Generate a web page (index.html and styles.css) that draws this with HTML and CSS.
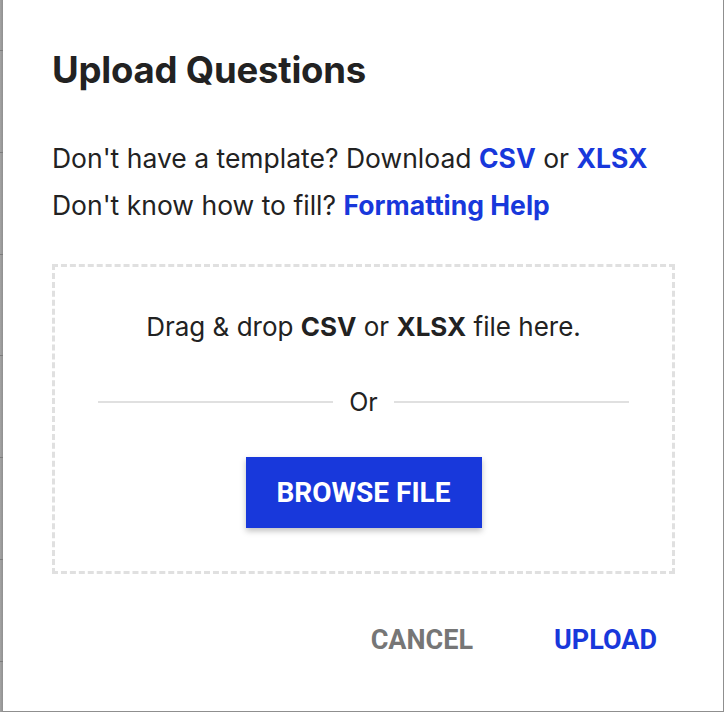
FILE: index.html
```html
<!DOCTYPE html>
<html lang="en">
<head>
    <meta charset="UTF-8">
    <meta name="viewport" content="width=device-width, initial-scale=1.0">
    <title>Upload Questions</title>
    <link rel="stylesheet" href="styles.css">
</head>
<body>
    <div class="backdrop">
        <span class="row-line"></span>
        <span class="row-line"></span>
        <span class="row-line"></span>
        <span class="row-line"></span>
        <span class="row-line"></span>
        <span class="row-line"></span>
        <span class="row-line"></span>
    </div>

    <div class="dialog">
        <h2 class="dialog-title">Upload Questions</h2>

        <p class="hint">Don't have a template? Download <a href="#">CSV</a> or <a href="#">XLSX</a></p>
        <p class="hint">Don't know how to fill? <a href="#">Formatting Help</a></p>

        <div class="dropzone">
            <p class="drop-text">Drag &amp; drop <strong>CSV</strong> or <strong>XLSX</strong> file here.</p>
            <div class="divider"><span>Or</span></div>
            <button class="browse-btn">Browse File</button>
        </div>

        <div class="actions">
            <button class="text-btn cancel">Cancel</button>
            <button class="text-btn upload">Upload</button>
        </div>
    </div>
</body>
</html>
```

FILE: styles.css
```css
html, body {
    margin: 0;
    height: 100%;
}
body {
    display: flex;
    align-items: flex-start;
    background-color: #8f8f8f;
    font-family: Inter, "Noto Sans", sans-serif;
    color: #222;
    overflow: hidden;
}
.backdrop {
    width: 3px;
    height: 712px;
    background: linear-gradient(to right, #a4a4a4, #909090);
    display: flex;
    flex-direction: column;
    justify-content: space-around;
}
.row-line {
    display: block;
    height: 1px;
    background: #7c7c7c;
}
.dialog {
    width: 720px;
    height: 711px;
    box-sizing: border-box;
    background: white;
    padding: 46px 48px 0 49px;
    display: flex;
    flex-direction: column;
}
.dialog-title {
    margin: 0 0 41px;
    font-size: 36.5px;
    line-height: 48px;
    font-weight: 700;
    letter-spacing: -0.2px;
}
.hint {
    margin: 0;
    font-size: 26.5px;
    line-height: 47px;
}
.hint a {
    color: #1838db;
    font-weight: 700;
    text-decoration: none;
}
.dropzone {
    margin: 35px 0 0;
    height: 310px;
    box-sizing: border-box;
    border: 3px dashed #e0e0e0;
    display: flex;
    flex-direction: column;
    align-items: center;
    padding: 0 43px;
}
.drop-text {
    margin: 42px 0 0;
    font-size: 26px;
    line-height: 36px;
}
.drop-text strong {
    font-weight: 700;
}
.divider {
    align-self: stretch;
    display: flex;
    align-items: center;
    gap: 16px;
    margin-top: 39px;
    font-size: 25px;
    line-height: 36px;
}
.divider::before,
.divider::after {
    content: "";
    flex: 1;
    height: 2px;
    background: #e0e0e0;
}
.browse-btn {
    margin-top: 37px;
    width: 236px;
    height: 71px;
    border: none;
    background-color: #1838db;
    color: white;
    font-family: Roboto, sans-serif;
    font-size: 28px;
    font-weight: 700;
    text-transform: uppercase;
    box-shadow: 0 3px 6px rgba(0,0,0,0.25);
    cursor: pointer;
}
.actions {
    display: flex;
    justify-content: flex-end;
    gap: 81px;
    margin-top: 48px;
    padding-right: 18px;
}
.text-btn {
    border: none;
    background: none;
    padding: 0;
    font-family: Roboto, sans-serif;
    font-size: 27px;
    font-weight: 700;
    line-height: 36px;
    text-transform: uppercase;
    cursor: pointer;
}
.cancel {
    color: #767676;
}
.upload {
    color: #1838db;
}
```
